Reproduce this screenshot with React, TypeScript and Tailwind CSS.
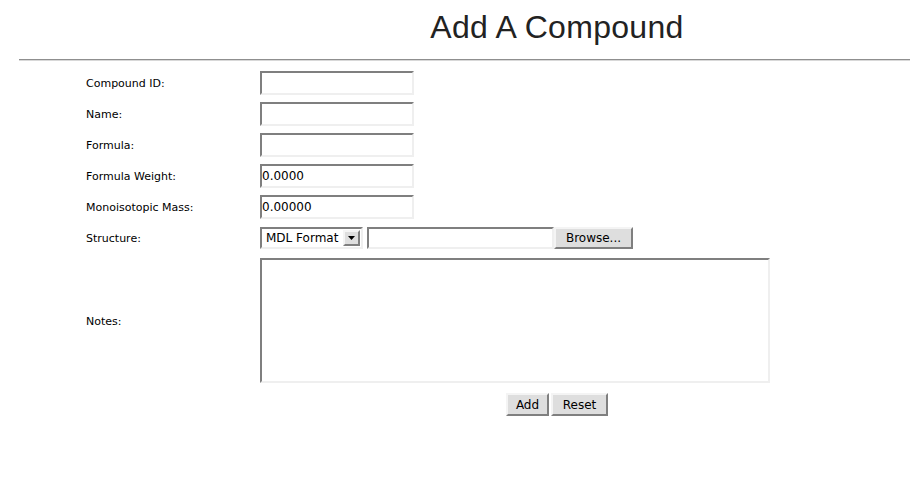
import React from 'react';

const sunken =
  'border-2 border-t-[#7f7f7f] border-l-[#7f7f7f] border-r-[#efefef] border-b-[#efefef] bg-white';
const raised =
  'border-2 border-t-[#f4f4f4] border-l-[#f4f4f4] border-r-[#7f7f7f] border-b-[#7f7f7f] bg-[#dedede]';

function Row({ label, children }: { label: string; children: React.ReactNode }) {
  return (
    <div className="flex items-center h-[31px]">
      <div className="w-[174px] text-[11px] pt-[3px]">{label}</div>
      {children}
    </div>
  );
}

function TextBox({ value = '' }: { value?: string }) {
  return (
    <input
      readOnly
      value={value}
      className={`${sunken} w-[154px] h-[24px] px-0 text-[12px] text-black outline-none`}
    />
  );
}

export default function App() {
  return (
    <div className="min-h-[503px] bg-white text-black font-['DejaVu_Sans',sans-serif]">
      {/* Title */}
      <div className="pl-[260px] pt-[11px] h-[59px]">
        <h1 className="w-[594px] text-center text-[32px] leading-[32px] text-[#222] font-['Liberation_Sans',Arial,sans-serif] tracking-[0.3px]">
          Add A Compound
        </h1>
      </div>
      <div className="ml-[19px] border-t border-t-[#8f8f8f] border-b border-b-[#d8d8d8]" />

      {/* Form */}
      <div className="pl-[86px] mt-[6px]">
        <Row label="Compound ID:">
          <TextBox />
        </Row>
        <Row label="Name:">
          <TextBox />
        </Row>
        <Row label="Formula:">
          <TextBox />
        </Row>
        <Row label="Formula Weight:">
          <TextBox value="0.0000" />
        </Row>
        <Row label="Monoisotopic Mass:">
          <TextBox value="0.00000" />
        </Row>
        <Row label="Structure:">
          <div className="flex items-center">
            <div className={`${sunken} w-[103px] h-[22px] flex items-center justify-between pl-[4px] pr-[1px]`}>
              <span className="text-[12px] leading-none">MDL Format</span>
              <div className={`${raised} w-[17px] h-[16px] flex items-center justify-center`}>
                <svg width="7" height="4" viewBox="0 0 7 4">
                  <path d="M0 0h7L3.5 4z" fill="#000" />
                </svg>
              </div>
            </div>
            <div className={`${sunken} ml-[4px] w-[187px] h-[22px]`} />
            <button className={`${raised} w-[79px] h-[22px] text-[12px] leading-none`}>Browse...</button>
          </div>
        </Row>
        <div className="flex items-center mt-[5px]">
          <div className="w-[174px] text-[11px] pt-[3px]">Notes:</div>
          <textarea readOnly className={`${sunken} w-[510px] h-[125px] resize-none outline-none`} />
        </div>
        <div className="flex justify-center gap-[2px] ml-[174px] w-[594px] mt-[10px]">
          <button className={`${raised} w-[43px] h-[23px] text-[12px] leading-none`}>Add</button>
          <button className={`${raised} w-[57px] h-[23px] text-[12px] leading-none`}>Reset</button>
        </div>
      </div>
    </div>
  );
}
